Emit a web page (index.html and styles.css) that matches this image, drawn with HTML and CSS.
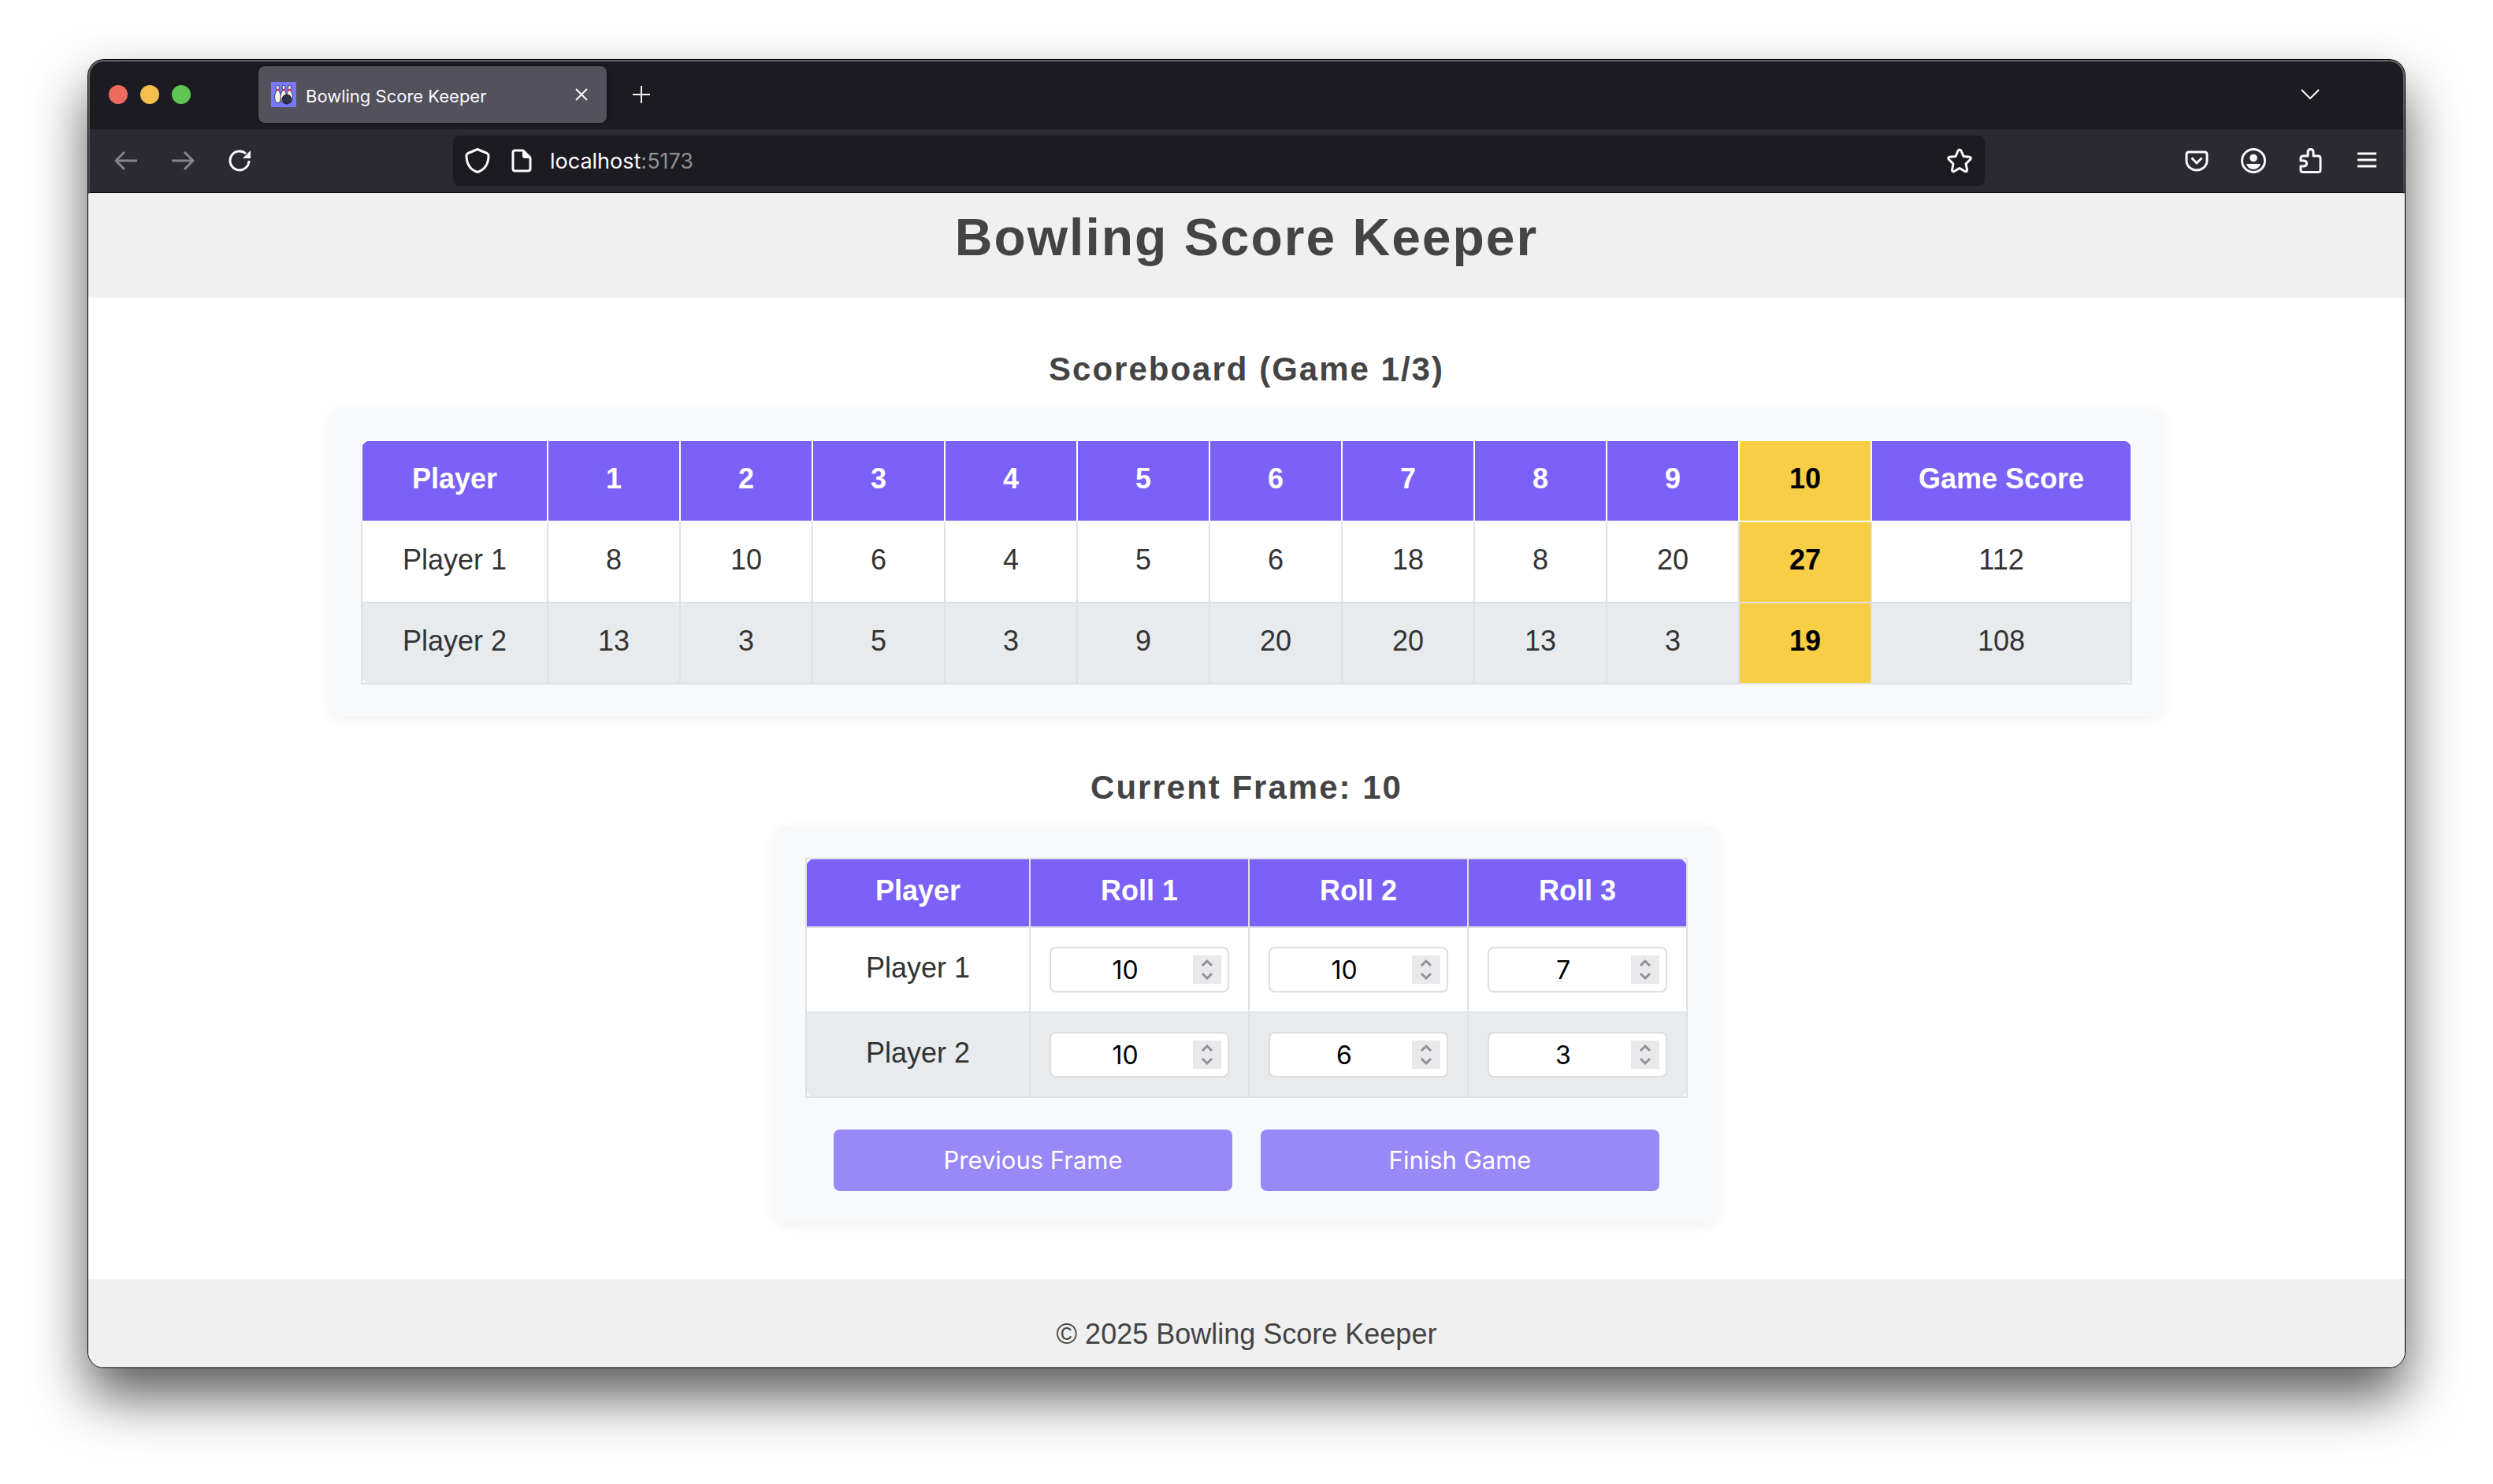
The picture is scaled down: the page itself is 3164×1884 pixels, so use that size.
FILE: index.html
```html
<!DOCTYPE html>
<html lang="en">
<head>
<meta charset="utf-8">
<title>Bowling Score Keeper</title>
<link rel="stylesheet" href="styles.css">
</head>
<body>
<svg class="sprite" aria-hidden="true">
  <symbol id="spin" viewBox="0 0 36 36"><path d="M12 13l6-6 6 6M12 23l6 6 6-6" fill="none" stroke="#8f8f9d" stroke-width="3"/></symbol>
</svg>
<div class="window">
  <div class="tabbar">
    <div class="lights"><span class="light red"></span><span class="light amber"></span><span class="light green"></span></div>
    <div class="tab">
      <svg class="i32" viewBox="0 0 32 32" aria-hidden="true">
        <rect width="32" height="32" fill="#7878fb"/>
        <g fill="#fbf3e8" stroke="#23233f" stroke-width=".8">
          <path id="pin" d="M8.500 4.300q1.800 0 1.800 2l-.3 4.700q2.500 4 2.500 8 0 4-2 7.500h-4q-2-3.500-2-7.500 0-4 2.500-8l-.3-4.700q0-2 1.800-2z"/>
          <use href="#pin" x="15"/>
          <use href="#pin" x="7.500"/>
        </g>
        <path d="M7 9h3v2.200H7zM14.500 9h3v2.200h-3zM22 9h3v2.200h-3z" fill="#d8323c"/>
        <circle cx="20" cy="22" r="6" fill="#2f3350" stroke="#1b1b30"/>
      </svg>
      <span class="tab-title">Bowling Score Keeper</span>
      <button class="icon" aria-label="Close tab"><svg class="i16" viewBox="0 0 16 16"><path d="M1 1l14 14M15 1L1 15" class="ln thin"/></svg></button>
    </div>
    <button class="icon" aria-label="New tab"><svg class="i24" viewBox="0 0 24 24"><path d="M12 1v22M1 12h22" class="ln thin"/></svg></button>
    <button class="icon all-tabs" aria-label="List all tabs"><svg class="i24" viewBox="0 0 24 24"><path d="M1 6l11 11L23 6" class="ln thin"/></svg></button>
  </div>
  <div class="toolbar">
    <div class="nav">
      <button class="icon dim" aria-label="Back"><svg class="i32" viewBox="0 0 32 32"><path d="M30 16H3M14 5L3 16l11 11" class="ln"/></svg></button>
      <button class="icon dim" aria-label="Forward"><svg class="i32" viewBox="0 0 32 32"><path d="M2 16h27M18 5l11 11-11 11" class="ln"/></svg></button>
      <button class="icon" aria-label="Reload"><svg class="i32" viewBox="0 0 32 32"><path d="M28 16a12 12 0 1 1-4-9" class="ln"/><path d="M30 3v10H20z" fill="currentColor"/></svg></button>
    </div>
    <div class="urlbar">
      <svg class="i32" viewBox="0 0 32 32" aria-hidden="true"><path d="M16 1.500l12 5q2 1 2 3c0 9-4 17-12.500 20.500q-1.500.6-3 0C6 26.500 2 18.500 2 9.500q0-2 2-3z" class="ln"/></svg>
      <svg class="i32 doc" viewBox="0 0 32 32" aria-hidden="true"><path d="M18 3H8q-3 0-3 3v20q0 3 3 3h16q3 0 3-3V12" class="ln"/><path d="M17 2h2l9 9v2h-8q-3 0-3-3z" fill="currentColor"/></svg>
      <span class="url">localhost<span class="port">:5173</span></span>
      <button class="icon star" aria-label="Bookmark"><svg class="i32" viewBox="0 0 32 32"><path d="M16 2q1.500 0 2 1.500l3 7 7.500.8q3 .8 1 3.200l-5.500 5.500 1.500 7.500q0 3-2.700 2L16 25.500 9.200 29.500q-2.700 1-2.700-2L8 20l-5.500-5.500q-2-2.400 1-3.200l7.500-.8 3-7Q14.500 2 16 2z" class="ln"/></svg></button>
    </div>
    <div class="tools">
      <button class="icon" aria-label="Save to Pocket"><svg class="i32" viewBox="0 0 32 32"><path d="M6 5h20q3 0 3 3v8a13 12 0 0 1-26 0V8q0-3 3-3z" class="ln"/><path d="M9.500 12.500L16 19l6.500-6.500" class="ln"/></svg></button>
      <button class="icon" aria-label="Account"><svg class="i32" viewBox="0 0 32 32"><circle cx="16" cy="16" r="14.500" class="ln"/><circle cx="16" cy="12.500" r="4.800" fill="currentColor"/><path d="M7 20h18q-2 7-9 7t-9-7z" fill="currentColor"/></svg></button>
      <button class="icon" aria-label="Extensions"><svg class="i32" viewBox="0 0 32 32"><path d="M13 10V5.500q0-4 3.500-4t3.500 4V10h6q3 0 3 3v15q0 2.500-3 2.500H7q-3 0-3-2.500v-5h3.500q4 0 4-3.500t-4-3.500H4v-3q0-3 3-3z" class="ln"/></svg></button>
      <button class="icon" aria-label="Menu"><svg class="i32" viewBox="0 0 32 32"><path d="M4 7h24M4 15h24M4 23h24" class="ln"/></svg></button>
    </div>
  </div>
  <div class="page">
    <header class="site-header"><h1>Bowling Score Keeper</h1></header>
    <main>
      <h2>Scoreboard (Game 1/3)</h2>
      <section class="card score-card">
        <table class="scores">
          <colgroup><col class="c-player"><col span="10"><col class="c-total"></colgroup>
          <thead><tr><th>Player</th><th>1</th><th>2</th><th>3</th><th>4</th><th>5</th><th>6</th><th>7</th><th>8</th><th>9</th><th class="now">10</th><th>Game Score</th></tr></thead>
          <tbody>
            <tr><td>Player 1</td><td>8</td><td>10</td><td>6</td><td>4</td><td>5</td><td>6</td><td>18</td><td>8</td><td>20</td><td class="now">27</td><td>112</td></tr>
            <tr><td>Player 2</td><td>13</td><td>3</td><td>5</td><td>3</td><td>9</td><td>20</td><td>20</td><td>13</td><td>3</td><td class="now">19</td><td>108</td></tr>
          </tbody>
        </table>
      </section>
      <h2>Current Frame: 10</h2>
      <section class="card frame-card">
        <table class="rolls">
          <thead><tr><th>Player</th><th>Roll 1</th><th>Roll 2</th><th>Roll 3</th></tr></thead>
          <tbody>
            <tr><td>Player 1</td>
              <td><label class="field"><input type="number" value="10" min="0" max="10" aria-label="Player 1, roll 1"><svg class="spin" aria-hidden="true"><use href="#spin"/></svg></label></td>
              <td><label class="field"><input type="number" value="10" min="0" max="10" aria-label="Player 1, roll 2"><svg class="spin" aria-hidden="true"><use href="#spin"/></svg></label></td>
              <td><label class="field"><input type="number" value="7" min="0" max="10" aria-label="Player 1, roll 3"><svg class="spin" aria-hidden="true"><use href="#spin"/></svg></label></td></tr>
            <tr><td>Player 2</td>
              <td><label class="field"><input type="number" value="10" min="0" max="10" aria-label="Player 2, roll 1"><svg class="spin" aria-hidden="true"><use href="#spin"/></svg></label></td>
              <td><label class="field"><input type="number" value="6" min="0" max="10" aria-label="Player 2, roll 2"><svg class="spin" aria-hidden="true"><use href="#spin"/></svg></label></td>
              <td><label class="field"><input type="number" value="3" min="0" max="10" aria-label="Player 2, roll 3"><svg class="spin" aria-hidden="true"><use href="#spin"/></svg></label></td></tr>
          </tbody>
        </table>
        <div class="actions"><button class="btn">Previous Frame</button><button class="btn">Finish Game</button></div>
      </section>
    </main>
    <footer class="site-footer">© 2025 Bowling Score Keeper</footer>
  </div>
</div>
</body>
</html>
```
FILE: styles.css
```css
* { box-sizing: border-box; }

body {
  margin: 0;
  padding: 76px 112px 148px;
  min-height: 100vh;
  display: flex;
  background: #fff;
  font: 36px/42px "Liberation Sans", Arial, sans-serif;
  color: #333;
}

button { font: inherit; border: 0; padding: 0; cursor: pointer; }
.sprite { position: absolute; width: 0; height: 0; }

/* Browser window */
.window {
  position: relative;
  flex: 1;
  min-width: 0;
  display: flex;
  flex-direction: column;
  border-radius: 20px;
  overflow: hidden;
  background: #fff;
  box-shadow: 0 0 0 1px #000, 0 36px 70px rgba(0, 0, 0, .66);
}

.window::after {
  content: "";
  position: absolute;
  inset: 0 0 auto;
  height: 168px;
  border: 2px solid #66666a;
  border-bottom: 0;
  border-radius: 20px 20px 0 0;
  mask: linear-gradient(#000 20px, rgba(0, 0, 0, .5));
  pointer-events: none;
}

.icon {
  display: grid;
  place-items: center;
  background: none;
  color: #fbfbfe;
}
.dim { color: #85848b; }
.ln {
  fill: none;
  stroke: currentColor;
  stroke-width: 3;
  stroke-linejoin: round;
}
.thin { stroke-width: 2; }
.i16 { width: 16px; height: 16px; }
.i24 { width: 24px; height: 24px; }
.i32 { width: 32px; height: 32px; }

.tabbar {
  height: 88px;
  padding: 8px 108px 8px 26px;
  display: flex;
  align-items: center;
  background: #1c1b22;
  font: 22px/28px Inter, sans-serif;
  color: #fbfbfe;
}
.lights { display: flex; gap: 16px; }
.light { width: 24px; height: 24px; border-radius: 50%; }
.red { background: #ed6a5e; }
.amber { background: #f5bf4f; }
.green { background: #61c554; }

.tab {
  width: 442px;
  height: 72px;
  margin: 0 32px 0 86px;
  padding: 0 24px 0 16px;
  display: flex;
  align-items: center;
  gap: 12px;
  border-radius: 8px;
  background: #52515c;
  box-shadow: 0 0 4px rgba(0, 0, 0, .6);
}
.tab-title { flex: 1; padding-top: 4px; }
.all-tabs { margin-left: auto; }

.toolbar {
  height: 81px;
  padding: 8px 32px;
  display: flex;
  align-items: center;
  justify-content: space-between;
  background: #2b2a33;
  border-bottom: 1px solid #0c0c0d;
}
.nav, .tools { display: flex; gap: 40px; }
.urlbar {
  width: 1944px;
  height: 64px;
  margin: 0 220px 0 222px;
  padding: 0 16px 0 15px;
  display: flex;
  align-items: center;
  border-radius: 8px;
  background: #1c1b22;
  font: 27px/32px Inter, sans-serif;
  color: #fbfbfe;
  flex-shrink: 1;
}
.doc { margin: 0 20px 0 24px; }
.url { padding-top: 2px; }
.port { color: #8f8f96; }
.star { margin-left: auto; }

/* Page */
.page { flex: 1; display: flex; flex-direction: column; }
.site-header {
  padding: 16px 0 37px;
  background: #f0f0f0;
  text-align: center;
}
h1, h2 { margin: 0; color: #444; letter-spacing: 2px; text-align: center; }
h1 { font-size: 66px; line-height: 80px; }
h2 { padding: 66px 0 24px; font-size: 42px; line-height: 50px; }

main { flex: 1; padding-bottom: 70px; }
.card {
  margin: 0 auto;
  padding: 40px;
  border-radius: 16px;
  background: #f8f9fb;
  box-shadow: 0 4px 16px rgba(0, 0, 0, .06);
}
.score-card { max-width: 2328px; }
.frame-card { max-width: 1200px; }

table {
  width: 100%;
  border-collapse: collapse;
  table-layout: fixed;
  text-align: center;
}
th, td { border: 2px solid #dee1e4; }
td { background: #fff; }
tr:nth-child(even) td { background: #e7ebee; }
th { background: #7b61f8; color: #fff; }

.scores th, .scores td { padding: 27px 0 32px; }
.scores th { border-color: #fff; }
.c-player { width: 236px; }
.c-total { width: 330px; }
.scores .now {
  color: #000;
  font-weight: bold;
}
.scores th.now, .scores td.now, .scores tr:nth-child(even) td.now { background: #f8ce46; }
thead th:first-child { border-top-left-radius: 12px; }
thead th:last-child { border-top-right-radius: 12px; }
tbody tr:last-child td:first-child { border-bottom-left-radius: 12px; }
tbody tr:last-child td:last-child { border-bottom-right-radius: 12px; }
.scores th.now, .scores td.now { border-radius: 4px; }

.rolls th { padding: 19px 0 24px; }
.rolls td { padding: 24px; }
.rolls td:first-child { padding: 26px 0 30px; }
.rolls th:first-child { width: 284px; }
.field {
  height: 58px;
  padding: 0 8px;
  display: flex;
  align-items: center;
  border: 2px solid #ddd;
  border-radius: 8px;
  background: #fff;
}
.field input {
  flex: 1;
  min-width: 0;
  height: 100%;
  padding: 0;
  border: 0;
  background: none;
  font: 32px/40px Inter, sans-serif;
  color: #000;
  text-align: center;
  appearance: textfield;
}
.field input::-webkit-inner-spin-button { appearance: none; margin: 0; }
.spin { width: 36px; height: 36px; background: #e9e9eb; }

.actions {
  margin-top: 40px;
  padding: 0 36px;
  display: flex;
  gap: 36px;
}
.btn {
  flex: 1;
  height: 78px;
  border-radius: 8px;
  background: #9988f8;
  color: #fff;
  font: 31px/40px Inter, sans-serif;
}
.site-footer {
  height: 112px;
  padding-top: 49px;
  background: #f0f0f0;
  color: #444;
  text-align: center;
}
```
